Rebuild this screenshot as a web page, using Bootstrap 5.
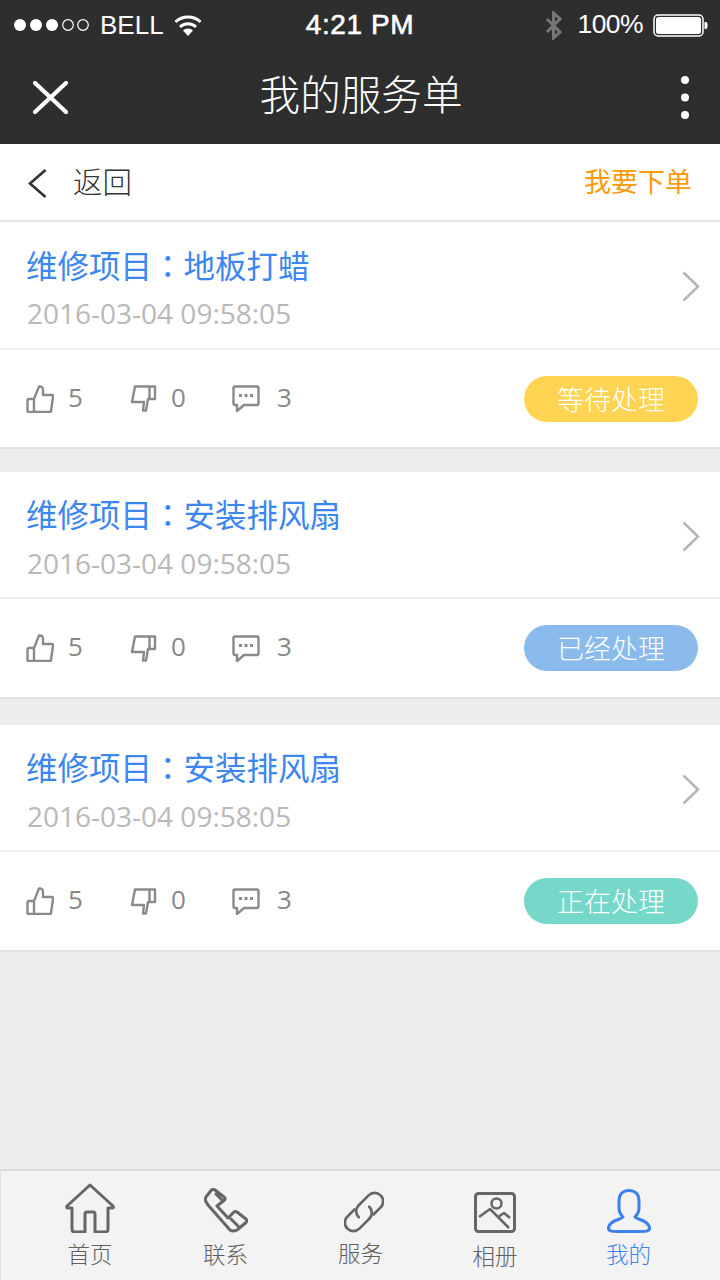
<!DOCTYPE html>
<html lang="zh-CN">
<head>
  <meta charset="UTF-8">
  <meta name="viewport" content="width=device-width, initial-scale=1.0">
  <title>我的服务单</title>
  <link rel="stylesheet" href="https://cdn.jsdelivr.net/npm/bootstrap@5.3.0/dist/css/bootstrap.min.css">
  <style>
    body {
      background: #ededed;
      font-family: "Liberation Sans", "Noto Sans CJK SC", sans-serif;
      font-weight: 300;
      overflow: hidden;
    }
    svg { display: block; flex: none; }

    .page { height: 1280px; }

    .top-head { background: #2e2e2e; color: #fff; height: 144px; }
    .status-row { height: 50px; padding: 0 12px 0 14px; font-size: 26px; font-weight: 400; }
    .status-side { width: 290px; }
    .status-time { font-size: 28px; font-weight: 400; letter-spacing: .6px; -webkit-text-stroke: .6px #fff; margin-right: 2px; }
    .carrier { margin: 0 10px 0 10px; }
    .battery-text { font-size: 26.5px; letter-spacing: -.6px; margin: 0 10px 0 16px; }
    .title-row { height: 94px; padding: 0 31px 0 33px; }
    .title-side { flex: 1 1 0; }
    .title-text { font-size: 40.6px; line-height: 1; margin-bottom: 2px; }

    .sub-bar { height: 78px; background: #fff; border-bottom: 2px solid #e4e4e4; padding: 2px 28px 0; }
    .back-text { font-size: 29.5px; color: #333; margin-left: 26px; }
    .order-link { font-size: 27px; font-weight: 400; color: #ff9a0a; text-decoration: none; }

    .order-item { background: #fff; border-bottom: 2px solid #e2e2e2; }
    .order-item.gap-a { margin-bottom: 23px; }
    .order-item.gap-b { margin-bottom: 26px; }
    .item-top { height: 128px; border-bottom: 2px solid #efefef; padding: 6px 20px 0 26px; }
    .item-short .item-top { height: 127px; }
    .item-title { font-size: 31.5px; line-height: 1; color: #3c86ef; margin: 0 0 16px; font-weight: 400; }
    .colon-mark { font-family: "Noto Sans CJK TC", sans-serif; }
    .item-date { font-family: "Open Sans", sans-serif; font-weight: 400; font-size: 28px; line-height: 1; color: #b9b9b9; margin-left: 1px; }
    .item-arrow { margin-bottom: 3px; }
    .item-foot { height: 97px; padding: 0 22px 0 26px; }
    .item-short .item-foot { height: 98px; }

    .stat { color: #888; font-size: 26px; line-height: 1; font-family: "Open Sans", sans-serif; font-weight: 400; }
    .stat-a { width: 104px; }
    .stat-b { width: 102px; }
    .stat-num-a { margin: 0 0 4px 14px; }
    .stat-num-b { margin: 0 0 4px 17px; }
    .stat-icon { fill: none; stroke: #8a8a8a; stroke-width: 2.4; stroke-linejoin: round; }

    .state-pill {
      width: 174px; height: 46px; line-height: 50px; padding: 0;
      font-size: 27px; font-weight: 300; color: #fff; border-radius: 23px;
    }
    .state-wait { background: #ffd452; }
    .state-done { background: #8bbbec; }
    .state-doing { background: #75d8c9; }

    .tab-bar {
      height: 111px; background: #f3f3f3;
      border-top: 2px solid #dedede; border-left: 1px solid #e2e2e2;
      padding-left: 21px;
    }
    .tab-cell { color: #5f5f5f; font-size: 22.5px; line-height: 1; text-decoration: none; }
    .tab-cell:nth-child(1) { width: 136px; }
    .tab-cell:nth-child(2), .tab-cell:nth-child(3) { width: 135px; }
    .tab-cell:nth-child(4) { width: 134px; }
    .tab-cell:nth-child(5) { width: 133px; }
    .tab-cell.active { color: #3b82f0; }
    .tab-icon { height: 62px; }
    .tab-label { margin-top: 12px; }
    .tab-cell:nth-child(3) .tab-icon { margin-left: 7px; }
    .tab-cell:nth-child(3) .tab-label { margin-top: 11px; }
    .tab-cell:nth-child(4) .tab-label { margin-top: 14px; }
  </style>
</head>
<body>
  <svg width="0" height="0" class="position-absolute">
    <symbol id="ico-up" viewBox="0 0 28 28"><path d="M8 27V14L13 1.500Q17 1 17 5V10H26Q27.500 10 27 12L25 26Q25 27 24 27H3Q1.500 27 1.500 26V16Q1.500 14 3 14H8"/></symbol>
    <symbol id="ico-down" viewBox="0 0 27 27"><path d="M5 1.500H25V14H18L16 25.500H13L14 17H2ZM19.500 1.500V14"/></symbol>
    <symbol id="ico-talk" viewBox="0 0 28 27"><path d="M3 1.500H25Q26.500 1.500 26.500 3V18Q26.500 20 25 20H12L5 26V20H3Q1.500 20 1.500 18V3Q1.500 1.500 3 1.500Z"/><path d="M7 10.500H10M12.500 10.500H15.500M18 10.500H21" stroke-width="2.800"/></symbol>
    <symbol id="ico-more" viewBox="0 0 18 31"><path d="M1.500 1.500L16 15.500L1.500 29.500" fill="none" stroke="#b5b5b5" stroke-width="2.500"/></symbol>
  </svg>

  <div class="page d-flex flex-column">
    <div class="top-head">
      <div class="status-row d-flex align-items-center justify-content-between">
        <div class="status-side d-flex align-items-center">
          <svg width="76" height="14" viewBox="0 0 76 14">
            <circle cx="6" cy="7" r="6" fill="#fff"/>
            <circle cx="22" cy="7" r="6" fill="#fff"/>
            <circle cx="38" cy="7" r="6" fill="#fff"/>
            <circle cx="54" cy="7" r="5.300" fill="none" stroke="#fff" stroke-width="1.200"/>
            <circle cx="69" cy="7" r="5.300" fill="none" stroke="#fff" stroke-width="1.200"/>
          </svg>
          <span class="carrier">BELL</span>
          <svg width="28" height="21" viewBox="0 0 28 21" fill="none" stroke="#fff" stroke-width="3">
            <path d="M1.500 7A18 18 0 0 1 26.500 7"/>
            <path d="M6 12A11.500 11.500 0 0 1 22 12"/>
            <path d="M14 21L9 15.500A7 7 0 0 1 19 15.500Z" fill="#fff" stroke="none"/>
          </svg>
        </div>
        <div class="status-time">4:21 PM</div>
        <div class="status-side d-flex align-items-center justify-content-end">
          <svg width="17" height="29" viewBox="0 0 17 29" fill="none" stroke="#777" stroke-width="3">
            <path d="M2 8L15 21L8.500 27V2L15 8L2 21"/>
          </svg>
          <span class="battery-text">100%</span>
          <svg width="55" height="23" viewBox="0 0 55 23">
            <rect x="1" y="1" width="49" height="21" rx="4" fill="none" stroke="#fff" stroke-width="1.500"/>
            <rect x="3" y="3" width="45" height="17" rx="2.500" fill="#fff"/>
            <path d="M51.500 8h1a2 2 0 0 1 2 2v3a2 2 0 0 1-2 2h-1z" fill="#fff"/>
          </svg>
        </div>
      </div>
      <div class="title-row d-flex align-items-center">
        <div class="title-side">
          <svg width="35" height="33" viewBox="0 0 35 33" stroke="#fff" stroke-width="4.200" stroke-linecap="round">
            <path d="M2 2L33 31M33 2L2 31"/>
          </svg>
        </div>
        <div class="title-text">我的服务单</div>
        <div class="title-side d-flex justify-content-end">
          <svg width="8" height="43" viewBox="0 0 8 43" fill="#fff">
            <circle cx="4" cy="4" r="4"/>
            <circle cx="4" cy="21.500" r="4"/>
            <circle cx="4" cy="39" r="4"/>
          </svg>
        </div>
      </div>
    </div>

    <div class="sub-bar d-flex align-items-center justify-content-between">
      <div class="d-flex align-items-center">
        <svg width="19" height="31" viewBox="0 0 19 31" fill="none" stroke="#333" stroke-width="2.700">
          <path d="M17.500 2L2 15.500L17.500 29"/>
        </svg>
        <span class="back-text">返回</span>
      </div>
      <a href="#" class="order-link">我要下单</a>
    </div>

    <div class="order-item gap-a">
      <div class="item-top d-flex align-items-center justify-content-between">
        <div>
          <h2 class="item-title">维修项目<span class="colon-mark" lang="zh-TW">：</span>地板打蜡</h2>
          <div class="item-date">2016-03-04 09:58:05</div>
        </div>
        <svg class="item-arrow" width="18" height="31"><use href="#ico-more"/></svg>
      </div>
      <div class="item-foot d-flex align-items-center justify-content-between">
        <div class="d-flex align-items-center">
          <div class="stat stat-a d-flex align-items-center">
            <svg class="stat-icon" width="28" height="28"><use href="#ico-up"/></svg>
            <span class="stat-num-a">5</span>
          </div>
          <div class="stat stat-b d-flex align-items-center">
            <svg class="stat-icon" width="27" height="27"><use href="#ico-down"/></svg>
            <span class="stat-num-a">0</span>
          </div>
          <div class="stat d-flex align-items-center">
            <svg class="stat-icon" width="28" height="27"><use href="#ico-talk"/></svg>
            <span class="stat-num-b">3</span>
          </div>
        </div>
        <span class="badge state-pill state-wait">等待处理</span>
      </div>
    </div>

    <div class="order-item item-short gap-b">
      <div class="item-top d-flex align-items-center justify-content-between">
        <div>
          <h2 class="item-title">维修项目<span class="colon-mark" lang="zh-TW">：</span>安装排风扇</h2>
          <div class="item-date">2016-03-04 09:58:05</div>
        </div>
        <svg class="item-arrow" width="18" height="31"><use href="#ico-more"/></svg>
      </div>
      <div class="item-foot d-flex align-items-center justify-content-between">
        <div class="d-flex align-items-center">
          <div class="stat stat-a d-flex align-items-center">
            <svg class="stat-icon" width="28" height="28"><use href="#ico-up"/></svg>
            <span class="stat-num-a">5</span>
          </div>
          <div class="stat stat-b d-flex align-items-center">
            <svg class="stat-icon" width="27" height="27"><use href="#ico-down"/></svg>
            <span class="stat-num-a">0</span>
          </div>
          <div class="stat d-flex align-items-center">
            <svg class="stat-icon" width="28" height="27"><use href="#ico-talk"/></svg>
            <span class="stat-num-b">3</span>
          </div>
        </div>
        <span class="badge state-pill state-done">已经处理</span>
      </div>
    </div>

    <div class="order-item item-short">
      <div class="item-top d-flex align-items-center justify-content-between">
        <div>
          <h2 class="item-title">维修项目<span class="colon-mark" lang="zh-TW">：</span>安装排风扇</h2>
          <div class="item-date">2016-03-04 09:58:05</div>
        </div>
        <svg class="item-arrow" width="18" height="31"><use href="#ico-more"/></svg>
      </div>
      <div class="item-foot d-flex align-items-center justify-content-between">
        <div class="d-flex align-items-center">
          <div class="stat stat-a d-flex align-items-center">
            <svg class="stat-icon" width="28" height="28"><use href="#ico-up"/></svg>
            <span class="stat-num-a">5</span>
          </div>
          <div class="stat stat-b d-flex align-items-center">
            <svg class="stat-icon" width="27" height="27"><use href="#ico-down"/></svg>
            <span class="stat-num-a">0</span>
          </div>
          <div class="stat d-flex align-items-center">
            <svg class="stat-icon" width="28" height="27"><use href="#ico-talk"/></svg>
            <span class="stat-num-b">3</span>
          </div>
        </div>
        <span class="badge state-pill state-doing">正在处理</span>
      </div>
    </div>

    <nav class="tab-bar mt-auto d-flex">
      <a href="#" class="tab-cell d-flex flex-column align-items-center">
        <div class="tab-icon d-flex align-items-end">
          <svg width="50" height="50" viewBox="0 0 50 50" fill="none" stroke="#666" stroke-width="3" stroke-linejoin="round"><path d="M25 2L2 23Q1 25 3 25H7V46Q7 49 10 49H20V31Q20 29 22 29H28Q30 29 30 31V49H40Q43 49 43 46V25H47Q49 25 48 23Z"/></svg>
        </div>
        <span class="tab-label">首页</span>
      </a>
      <a href="#" class="tab-cell d-flex flex-column align-items-center">
        <div class="tab-icon d-flex align-items-end">
          <svg width="44" height="45" viewBox="0 0 44 45" fill="none" stroke="#666" stroke-width="3" stroke-linejoin="round"><path d="M7 2.500Q9 .5 11 2L20 9Q22 10.500 20.500 12L13 18L24 30L30 24Q31 23 33 24L42 31Q43.500 33 42 34.500L33 42Q29 44 26 42L4 17Q0 12 2 9ZM12 6L18 12M27 31L34 38" stroke-linecap="round"/></svg>
        </div>
        <span class="tab-label">联系</span>
      </a>
      <a href="#" class="tab-cell d-flex flex-column align-items-center">
        <div class="tab-icon d-flex align-items-end">
          <svg width="40" height="42" viewBox="0 0 40 42" fill="none" stroke="#666" stroke-width="2.700" stroke-linecap="round"><g transform="rotate(-45 20 21)"><path d="M15 12.500H5A8.500 8.500 0 0 0 5 29.500H19A8.500 8.500 0 0 0 27.500 21"/><path d="M25 29.500H35A8.500 8.500 0 0 0 35 12.500H21A8.500 8.500 0 0 0 12.500 21"/></g></svg>
        </div>
        <span class="tab-label">服务</span>
      </a>
      <a href="#" class="tab-cell d-flex flex-column align-items-center">
        <div class="tab-icon d-flex align-items-end">
          <svg width="42" height="41" viewBox="0 0 42 41" fill="none" stroke="#666" stroke-width="3" stroke-linejoin="round"><rect x="1.500" y="1.500" width="39" height="38" rx="3"/><circle cx="22.500" cy="11.500" r="5" stroke-width="2.500"/><path d="M5 25L16 17L35 36M24 25L30 21L36 26" stroke-width="2.500"/></svg>
        </div>
        <span class="tab-label">相册</span>
      </a>
      <a href="#" class="tab-cell active d-flex flex-column align-items-center">
        <div class="tab-icon d-flex align-items-end">
          <svg width="44" height="44" viewBox="0 0 44 44" fill="none" stroke="#3b82f0" stroke-width="3" stroke-linejoin="round"><path d="M22 1.500C15 1.500 12 6 12 12V19C12 24 15 27 16 28C14 31 2 31 1.500 39C1 43 6 42.500 22 42.500C38 42.500 43 43 42.500 39C42 31 30 31 28 28C29 27 32 24 32 19V12C32 6 29 1.500 22 1.500Z"/></svg>
        </div>
        <span class="tab-label">我的</span>
      </a>
    </nav>
  </div>

  <script src="https://cdn.jsdelivr.net/npm/bootstrap@5.3.0/dist/js/bootstrap.bundle.min.js"></script>
</body>
</html>
